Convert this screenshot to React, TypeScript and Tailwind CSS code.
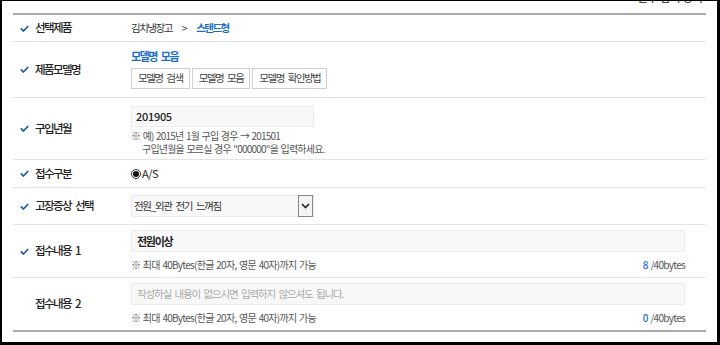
const font = { fontFamily: '"Noto Sans CJK KR", "Noto Sans", sans-serif' };

const Check = ({ show = true }: { show?: boolean }) => (
  <span className="w-[9px] flex items-center">
    {show && (
      <svg width="9" height="7" viewBox="0 0 9 7">
        <path d="M0.8 3.4 L3.4 6 L8.2 1" fill="none" stroke="#1b5aa6" strokeWidth="1.7" />
      </svg>
    )}
  </span>
);

const Row = ({
  label,
  check = true,
  children,
  className = "",
}: {
  label: string;
  check?: boolean;
  children: React.ReactNode;
  className?: string;
}) => (
  <div className={`flex border-b border-[#e3e3e3] ${className}`}>
    <div className="w-[118px] flex items-center gap-[6px] pl-[7px] text-[11.5px] tracking-[-1.6px] [word-spacing:3px] font-medium text-[#222]">
      <Check show={check} />
      <span>{label}</span>
    </div>
    <div className="flex-1 flex flex-col justify-center pr-[21px]">{children}</div>
  </div>
);

const Note = ({ count }: { count: number }) => (
  <div className="flex justify-between text-[10px] tracking-[-0.7px] [word-spacing:1px] text-[#555] mt-[5px]">
    <span>※ 최대 40Bytes(한글 20자, 영문 40자)까지 가능</span>
    <span>
      <span className="text-[#1a6fc4] font-medium">{count}</span> /40bytes
    </span>
  </div>
);

export default function App() {
  return (
    <div
      className="w-[720px] h-[345px] bg-white border-l-2 border-t border-r-[3px] border-b-[3px] border-black overflow-hidden"
      style={font}
    >
      <div className="h-[12px] relative overflow-hidden">
        <span className="absolute right-[14px] -top-[12px] text-[11px] font-medium text-[#444]">* 필수 입력 항목</span>
      </div>
      <div className="mx-[11px] border-t-2 border-[#aaaaaa]">
        <Row label="선택제품" className="h-[27px]">
          <div className="text-[10.5px] tracking-[-1.5px] text-[#333] flex gap-[10px]">
            <span>김치냉장고</span>
            <span>&gt;</span>
            <span className="text-[#1a6fc4] font-bold">스탠드형</span>
          </div>
        </Row>
        <Row label="제품모델명" className="h-[56px]">
          <div className="text-[11px] tracking-[-1.5px] [word-spacing:3px] text-[#1a6fc4] font-bold leading-none mb-[6px]">모델명 모음</div>
          <div className="flex gap-[2px]">
            {["모델명 검색", "모델명 모음", "모델명 확인방법"].map((b) => (
              <span
                key={b}
                className="h-[21px] px-[6px] border border-[#cfcfcf] text-[10.5px] tracking-[-1.5px] [word-spacing:3px] text-[#444] flex items-center bg-white"
              >
                {b}
              </span>
            ))}
          </div>
        </Row>
        <Row label="구입년월" className="h-[62px]">
          <div className="mt-[3px] w-[183px] h-[21px] bg-[#f8f8f8] border border-[#ececec] text-[11px] tracking-[-0.3px] font-medium text-[#222] flex items-center px-[4px]">
            201905
          </div>
          <div className="text-[10px] tracking-[-0.8px] [word-spacing:1px] text-[#555] leading-[13px] mt-[2px]">
            <div>※ 예) 2015년 1월 구입 경우 → 201501</div>
            <div className="pl-[11px]">구입년월을 모르실 경우 "000000"을 입력하세요.</div>
          </div>
        </Row>
        <Row label="접수구분" className="h-[28px]">
          <div className="flex items-center gap-[1px] text-[11px] text-[#222]">
            <span className="w-[10px] h-[10px] rounded-full border border-[#333] flex items-center justify-center">
              <span className="w-[6px] h-[6px] rounded-full bg-[#111]" />
            </span>
            <span className="tracking-[-0.5px]">A/S</span>
          </div>
        </Row>
        <Row label="고장증상 선택" className="h-[37px]">
          <div className="w-[183px] h-[22px] bg-[#f8f8f8] border border-[#ececec] flex items-center justify-between">
            <span className="text-[10.5px] tracking-[-1.4px] [word-spacing:3px] text-[#333] pl-[2px]">전원_외관 전기 느껴짐</span>
            <span className="w-[15px] h-[22px] border border-[#888] bg-[#f4f4f4] flex items-center justify-center">
              <svg width="9" height="6" viewBox="0 0 9 6">
                <path d="M1 1 L4.5 4.5 L8 1" fill="none" stroke="#222" strokeWidth="1.6" />
              </svg>
            </span>
          </div>
        </Row>
        <Row label="접수내용 1" className="h-[53px]">
          <div className="h-[22px] bg-[#f8f8f8] border border-[#ececec] text-[11px] tracking-[-1.3px] font-bold text-[#222] flex items-center px-[5px]">
            전원이상
          </div>
          <Note count={8} />
        </Row>
        <Row label="접수내용 2" check={false} className="h-[54px] border-b-2 border-b-[#aaaaaa]">
          <div className="h-[22px] bg-[#f8f8f8] border border-[#ececec] text-[10.5px] tracking-[-1.1px] [word-spacing:2px] text-[#aaa] flex items-center px-[5px]">
            작성하실 내용이 없으시면 입력하지 않으셔도 됩니다.
          </div>
          <Note count={0} />
        </Row>
      </div>
    </div>
  );
}
